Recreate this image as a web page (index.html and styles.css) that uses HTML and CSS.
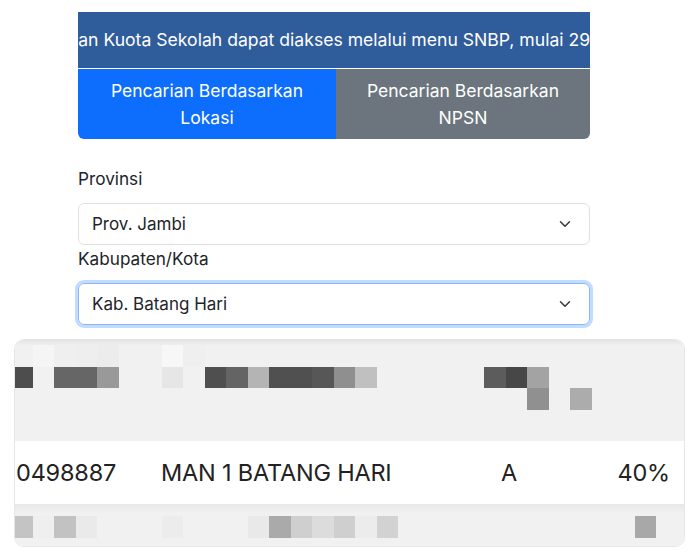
FILE: index.html
```html
<!DOCTYPE html>
<html lang="id">

<head>
  <meta charset="UTF-8" />
  <meta name="viewport" content="width=device-width, initial-scale=1.0" />
  <title>Kuota Sekolah SNBP</title>
  <link rel="stylesheet" href="styles.css">
</head>

<body>
  <div class="wrap">
    <div class="marquee">
      <span class="marquee-text">Pengumuman Kuota Sekolah dapat diakses melalui menu SNBP, mulai 29</span>
    </div>

    <div class="tabs">
      <div class="tab active">Pencarian Berdasarkan<br>Lokasi</div>
      <div class="tab">Pencarian Berdasarkan<br>NPSN</div>
    </div>

    <label class="field-label">Provinsi</label>
    <div class="select">
      <span>Prov. Jambi</span>
      <svg width="16" height="12" viewBox="0 0 16 16"><path d="m2 5 6 6 6-6" fill="none" stroke="#343a40" stroke-width="2" stroke-linecap="round" stroke-linejoin="round"/></svg>
    </div>

    <label class="field-label second">Kabupaten/Kota</label>
    <div class="select focus">
      <span>Kab. Batang Hari</span>
      <svg width="16" height="12" viewBox="0 0 16 16"><path d="m2 5 6 6 6-6" fill="none" stroke="#343a40" stroke-width="2" stroke-linecap="round" stroke-linejoin="round"/></svg>
    </div>
  </div>

  <div class="card">
    <div class="row blurred head">
      <div class="mosaic" data-rows="head"></div>
    </div>
    <div class="row data">
      <span>0498887</span>
      <span>MAN 1 BATANG HARI</span>
      <span>A</span>
      <span class="pct">40%</span>
    </div>
    <div class="row blurred foot">
      <div class="mosaic" data-rows="foot"></div>
    </div>
  </div>

  <script>
    // censored cells, one string per mosaic row ("." = empty)
    const shades = {
      head: [
        ". f5 ef ee ec . . f7 ef . . . . . . . . . . . . . . .",
        "4d . 66 66 99 . . e6 . 4f 64 b4 50 50 57 8f c0 . . . . . 5c 47 a3",
        ". . . . . . . . . . . . . . . . . . . . . . . . 90 . ac",
        ". . . . . . . . . . . . . . . . . . . . . . . . . . ."
      ],
      foot: [
        "c4 ef c2 ea . . . ec . . . e9 aa cf dc cf ec d2 . . . . . . . . . . . a8"
      ]
    };

    document.querySelectorAll(".mosaic").forEach((box) => {
      shades[box.dataset.rows].forEach((line) => {
        const row = document.createElement("div");
        row.className = "mosaic-row";
        line.split(" ").forEach((c) => {
          const cell = document.createElement("i");
          if (c !== ".") cell.style.background = "#" + c + c.slice(0, 2) + c.slice(0, 2);
          row.appendChild(cell);
        });
        box.appendChild(row);
      });
    });
  </script>
</body>

</html>
```

FILE: styles.css
```css
body {
  background: #fff;
  color: #212529;
  font-family: Inter, "Noto Sans", sans-serif;
  margin: 0;
}

.wrap {
  margin: 12px 0 0 78px;
  width: 512px;
}

.marquee {
  background: #2f5c9b;
  color: #fff;
  font-size: 17.6px;
  height: 56px;
  line-height: 56px;
  overflow: hidden;
  white-space: nowrap;
}

.marquee-text {
  display: inline-block;
  margin-left: -94px;
}

.tabs {
  border-radius: 0 0 6px 6px;
  display: flex;
  margin-top: 1px;
  overflow: hidden;
}

.tab {
  background: #6c757d;
  color: #fff;
  flex: 1;
  font-size: 17.5px;
  line-height: 27px;
  padding: 8px 0;
  text-align: center;
}

.tab.active {
  background: #0d6efd;
  flex: 0 0 258px;
}

.field-label {
  display: block;
  font-size: 17.2px;
  line-height: 24px;
  margin: 28px 0 12px;
}

.field-label.second {
  margin: 2px 0 12px;
}

.select {
  align-items: center;
  border: 1px solid #dee2e6;
  border-radius: 6px;
  box-sizing: border-box;
  display: flex;
  font-size: 17px;
  height: 42px;
  justify-content: space-between;
  padding: 0 16px 0 13px;
}

.select.focus {
  border-color: #86b7fe;
  box-shadow: 0 0 0 3px rgba(13, 110, 253, .25);
}

.card {
  border: 1px solid #e6e6e6;
  border-radius: 10px;
  margin: 14px 15px 0 14px;
  overflow: hidden;
}

.row.blurred {
  background: #f1f1f1;
  overflow: hidden;
}

.row.head {
  background: linear-gradient(#e4e4e4, #f1f1f1 6px);
  height: 101px;
}

.row.foot {
  background: linear-gradient(#e8e8e8, #f1f1f1 10px);
  height: 42px;
}

.mosaic {
  margin-left: -4px;
}

.head .mosaic {
  padding-top: 5px;
}

.foot .mosaic {
  padding-top: 12px;
}

.mosaic-row {
  display: flex;
  height: 21.5px;
}

.mosaic-row i {
  flex: 0 0 21.5px;
}

.row.data {
  align-items: center;
  color: #222;
  display: grid;
  font-size: 23.5px;
  grid-template-columns: 145px 340px 1fr auto;
  height: 63px;
  letter-spacing: -0.2px;
  padding: 0 14px 0 1px;
}
```
